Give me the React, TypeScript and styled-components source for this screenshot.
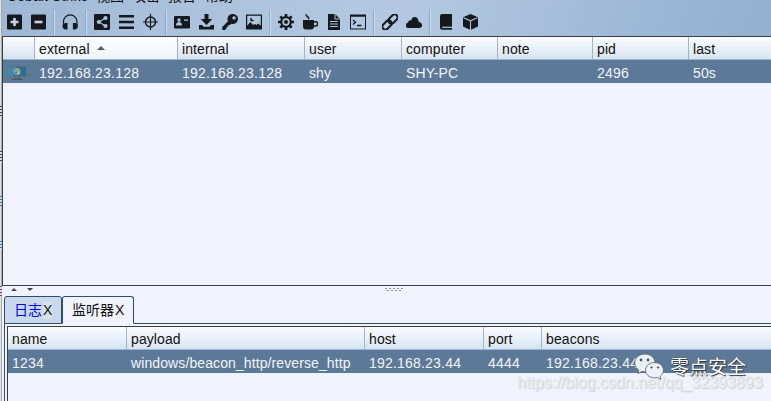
import React from "react";
import styled, { createGlobalStyle, css } from "styled-components";

const Global = createGlobalStyle`
  * { box-sizing: border-box; }
  body { margin: 0; background: #f0f3fb; }
`;

const Screen = styled.div`
  width: 771px;
  height: 401px;
  display: flex;
  overflow: hidden;
  background: #f0f3fb;
  font: 14px/22px "Liberation Sans", "Noto Sans CJK SC", sans-serif;
  color: #111;
`;

const Backdrop = styled.div`
  flex: none;
  width: 2px;
  display: flex;
  flex-direction: column;
  background: linear-gradient(90deg, #e2e2e2 50%, #a9a9a9 50%);
`;

const Mark = styled.i<{ $gap: number; $color: string; $h: number }>`
  flex: none;
  margin-top: ${(p) => p.$gap}px;
  height: ${(p) => p.$h}px;
  background: repeating-linear-gradient(${(p) => p.$color} 0 1px, #d8d8d8 1px 3px);
`;

const Window = styled.main`
  flex: 1;
  min-width: 0;
  display: flex;
  flex-direction: column;
`;

const Chrome = styled.header`
  flex: none;
  height: 36px;
  background: linear-gradient(105deg, #9db8d5 0%, #a9c1db 20%, #b4c9e1 52%, #a0bad7 78%, #93b0d0 100%);
`;

const MenuBar = styled.nav`
  height: 8px;
  display: flex;
  align-items: flex-end;
  overflow: hidden;
  padding: 0 0 2px 5px;
`;

const MenuItem = styled.span<{ $width: number; $spacing?: number }>`
  flex: none;
  width: ${(p) => p.$width}px;
  height: 20px;
  line-height: 20px;
  letter-spacing: ${(p) => p.$spacing ?? 0}px;
  white-space: nowrap;
`;

const Toolbar = styled.div`
  display: flex;
  height: 28px;
  align-items: center;
`;

const Tool = styled.span`
  flex: none;
  width: 24px;
  height: 28px;
  padding: 6px 4px;
  svg { display: block; }
`;

const Divider = styled.i`
  flex: none;
  width: 8px;
  height: 25px;
  border-left: 3px solid transparent;
  background: linear-gradient(90deg, #90a9c3 1px, #ccdcec 1px 2px, transparent 2px) padding-box;
`;

const Table = styled.section<{ $h?: number }>`
  flex: none;
  height: ${(p) => (p.$h ? p.$h + "px" : "auto")};
  border-top: 1px solid #3b3e42;
  border-left: 1px solid #3b3e42;
  border-bottom: ${(p) => (p.$h ? "1px solid #3b3e42" : "0")};
  background: #f0f3fb;
`;

const Row = styled.div<{ $head?: boolean; $cols: string }>`
  display: grid;
  grid-template-columns: ${(p) => p.$cols};
  height: 23px;
  overflow: hidden;
  ${(p) =>
    p.$head
      ? css`
          background: linear-gradient(#fafcff, #d9e4f1);
          border-bottom: 1px solid #9ab6d2;
          color: #111;
        `
      : css`
          background: #5d7998;
          color: #f2f5fa;
        `}
`;

const Cell = styled.span<{ $head?: boolean; $sorted?: boolean; $last?: boolean; $spacing?: number }>`
  display: flex;
  align-items: center;
  height: 23px;
  padding: ${(p) => (p.$head ? 1 : 3)}px 0 0 4px;
  line-height: 20px;
  letter-spacing: ${(p) => p.$spacing ?? 0.1}px;
  white-space: nowrap;
  background: ${(p) => (p.$sorted ? "linear-gradient(#fdfeff, #edf3f9)" : "none")};
  border-right: ${(p) => (p.$last ? 0 : 1)}px solid ${(p) => (p.$head ? "#9ab6d2" : "transparent")};
`;

const SortArrow = styled.i`
  margin: -2px 0 0 7px;
  border: 4px solid transparent;
  border-top: 0;
  border-bottom-color: #55585c;
`;

const Splitter = styled.div`
  flex: none;
  height: 10px;
  svg { display: block; }
`;

const Tabs = styled.div`
  flex: none;
  height: 28px;
  display: flex;
  padding-left: 2px;
  background: linear-gradient(#2c4f70, #2c4f70) 2px 27px / 100% 1px no-repeat;
`;

const Tab = styled.div<{ $width: number; $active?: boolean }>`
  width: ${(p) => p.$width}px;
  height: 28px;
  display: flex;
  align-items: center;
  padding: 0 0 1px 9px;
  border: 1px solid #2c4f70;
  border-radius: 3px 3px 0 0;
  border-bottom-color: ${(p) => (p.$active ? "#f0f3fb" : "#2c4f70")};
  background: ${(p) => (p.$active ? "#f0f3fb" : "#cad9ea")};
  color: ${(p) => (p.$active ? "#111" : "#0000f0")};
  white-space: nowrap;
`;

const Close = styled.b<{ $active?: boolean }>`
  margin: 1px 0 0 1px;
  font-weight: 400;
  line-height: 17px;
  color: #111;
  background: ${(p) => (p.$active ? "#eceef4" : "#d6e1ec")};
`;

const Pane = styled.div`
  flex: 1;
  margin-left: 2px;
  padding: 2px 0 0 2px;
  border-left: 1px solid #2c4f70;
`;

const PaneInner = styled.div`
  height: 100%;
  border-left: 1px solid #3b3e42;
  section { border-left: 0; }
`;

const Watermark = styled.div`
  position: absolute;
  left: 517px;
  top: 373px;
  font-size: 16px;
  line-height: 20px;
  white-space: nowrap;
  color: #e9ebf0;
  text-shadow: 1px 1px 1px #c9ccd3;
`;

const Brand = styled.div`
  position: absolute;
  left: 634px;
  top: 353px;
  display: flex;
  color: #fff;
`;

const BrandName = styled.span`
  margin: 1px 0 0 5px;
  font-size: 19px;
  line-height: 27px;
  text-shadow: 1px 1px 1px #30343a, 0 0 1px #30343a;
`;

const K = "#15181c";

const shapes: Record<string, React.ReactNode> = {
  plus: <><rect x="1" y="0.5" width="15" height="15" rx="1" /><path d="M8.500 4v8M4.500 8h8" stroke="#c3d4e6" strokeWidth="2.600" /></>,
  minus: <><rect x="1" y="0.5" width="15" height="15" rx="1" /><path d="M4.500 8h8" stroke="#c3d4e6" strokeWidth="2.600" /></>,
  headphones: <><path d="M1.500 11V7.600a6.700 6.700 0 0 1 13.400 0V11" fill="none" stroke={K} strokeWidth="1.200" /><path d="M3.200 9h2.300v6.600H4C1.800 15.600.5 14 .5 12c0-1.500 1-2.700 2.700-3zM13.200 9h-2.300v6.600h1.500c2.200 0 3.500-1.600 3.500-3.600 0-1.500-1-2.700-2.700-3z" /></>,
  share: <><rect x="0" y="0" width="16" height="16" rx="1" /><path d="M11.500 4 5 8l6.500 4" fill="none" stroke="#adc3dc" strokeWidth="1.300" /><g fill="#adc3dc"><circle cx="11.500" cy="4" r="2.100" /><circle cx="4.800" cy="8" r="2.100" /><circle cx="11.500" cy="12" r="2.100" /></g></>,
  bars: <path d="M1 1h15v2.500H1zM1 6.800h15v2.400H1zM1 12.500h15V15H1z" />,
  target: <g fill="none" stroke={K}><circle cx="8.500" cy="8" r="5" strokeWidth="1.500" /><path d="M8.500 0v16M1 8h15" strokeWidth="1.200" /></g>,
  card: <><rect x="0" y="2" width="16" height="12.500" rx="1.200" /><g fill="#adc3dc"><circle cx="5" cy="6" r="1.700" /><path d="M2 11.500c0-2.200 1-3.400 3-3.400s3 1.200 3 3.400zM10 5.500h4v1.300h-4z" /></g></>,
  download: <path d="M6.500 0h4v5h3.800L8.500 11 2.700 5h3.800zM1 11h3l1.500 1.700h6L13 11h3v4.500H1z" />,
  key: <path fillRule="evenodd" d="M11 0a5 5 0 1 1-1.700 9.700L8 11H6.300v1.700H4.600v1.700L3 16H.3v-3L6 7.200A5 5 0 0 1 11 0zm1 2.200a1.700 1.700 0 1 0 .1 3.400 1.700 1.700 0 0 0-.1-3.400z" />,
  image: <><path fillRule="evenodd" d="M0 .5h16v15H0zM1.200 1.700v10l3-3.700 3 3 1.500-1 2 1 1.500-1.500 2.600 2.200V1.700z" /><path d="M5.500 3.500a2 2 0 1 0 2.500 2.500 2 2 0 0 1-2.500-2.500z" /></>,
  gear: <><circle cx="8" cy="8" r="4.800" fill="none" stroke={K} strokeWidth="2.200" /><path d="M8 0v3M8 13v3M0 8h3M13 8h3M2.350 2.350l2.100 2.100M11.550 11.550l2.100 2.100M2.350 13.650l2.100-2.100M11.550 4.450l2.100-2.100" stroke={K} strokeWidth="2.700" /><circle cx="8" cy="8" r="2" /></>,
  coffee: <><path d="M1 6h11v6.500a3 3 0 0 1-3 3H4a3 3 0 0 1-3-3z" /><path d="M12 7.800h1.500a2 2 0 0 1 0 4.200H12M6 5C8.500 3 3 2.500 4.500.3" fill="none" stroke={K} strokeWidth="1.500" /></>,
  file: <><path d="M2 0h7l5 5v11H2z" /><path d="M9 0v5h5M4 7.500h8M4 10h8M4 12.500h8" fill="none" stroke="#adc3dc" strokeWidth="1" /></>,
  terminal: <><path fillRule="evenodd" d="M0 .5h16v15H0zM1 2.800v11.700h14V2.800z" /><path d="m3 6 2.500 2.200L3 10.500M7 11.500h4.500" fill="none" stroke={K} strokeWidth="1.300" /></>,
  link: <g transform="rotate(-45 8 8)" fill="none" stroke={K} strokeWidth="2"><rect x="-1.500" y="5" width="10.500" height="6" rx="3" /><rect x="7" y="5" width="10.500" height="6" rx="3" /></g>,
  cloud: <path d="M2.500 14C-.8 14-.8 9 2.200 8.600c0-2 1.700-2.900 3-2.200C6 1.500 12.600 1.800 12.600 7.800 17 8.300 17 14 13.500 14z" />,
  book: <><path d="M4 0h10v15.700H4a2 2 0 0 1-2-2V2a2 2 0 0 1 2-2z" /><path d="M4 13.300h10" stroke="#adc3dc" strokeWidth="1.200" /></>,
  cube: <><path d="M8.500 0 16 3.200v9.200L8.500 16 1 12.400V3.200z" /><path d="m1.500 3.800 7 3 7-3M8.500 6.800V16" fill="none" stroke="#adc3dc" strokeWidth="1.100" /></>,
};

const groups = [
  ["plus", "minus"],
  ["headphones"],
  ["share", "bars", "target"],
  ["card", "download", "key", "image"],
  ["gear", "coffee", "file", "terminal"],
  ["link", "cloud"],
  ["book", "cube"],
];

const sessionCols = "32px 143px 127px 97px 96px 95px 96px 1fr";
const listenerCols = "119px 238px 119px 58px 1fr";

const Computer = () => (
  <svg width="20" height="17" viewBox="0 0 20 17">
    <path d="M0 .5h20v12.500H0z" fill="#6b7580" />
    <path d="M1 1.500h18v10H1z" fill="#2b6f96" />
    <path d="M1 1.500h8l-3 10H1z" fill="#3f8aac" />
    <path d="M6 13h8l2 2H4z" fill="#525b66" />
    <circle cx="10" cy="6.500" r="3.500" fill="#8cabb5" />
    <path d="M8 4.500h2v2H8z" fill="#d2753c" />
    <path d="M10.500 5h2v2h-2z" fill="#89ad49" />
    <path d="M8 7h2v2H8z" fill="#397fc0" />
    <path d="M10.500 7.500h2v1.500h-2z" fill="#e8c14e" />
  </svg>
);

const Grip = () => (
  <svg width="500" height="10" fill="#43474c">
    <path d="m9 5 3-3 3 3zM25 2h6l-3 3z" />
    <g fill="#8a929e">
      {[0, 1, 2, 3, 4].map((i) => (
        <React.Fragment key={i}>
          <rect x={383 + i * 4} y="2" width="2" height="1" />
          {i < 4 && <rect x={385 + i * 4} y="4" width="2" height="1" />}
        </React.Fragment>
      ))}
    </g>
  </svg>
);

const WeChat = () => (
  <svg width="31" height="29" viewBox="0 0 31 29" fill="#edf1f5" stroke="#4a5a6c" strokeWidth=".8">
    <path d="M11 1C5 1 .7 4.800.7 10c0 3 1.500 5.200 4 7L4 20.500l4-2c5 1.200 13-1 13-8.500 0-5-4-9-10-9z" />
    <path d="M20.500 9.500c-5.200 0-9 3.300-9 7.700s3.800 7.600 9 7.600c1 0 2-.1 3-.4l3.500 2-.8-3.200c2-1.500 3.300-3.500 3.300-6 0-4.400-3.800-7.700-9-7.700z" />
    <g fill="#40566f" stroke="none"><circle cx="7" cy="7" r="1.400" /><circle cx="14" cy="7" r="1.400" /><circle cx="17.500" cy="14.500" r="1.100" /><circle cx="24" cy="14.500" r="1.100" /></g>
  </svg>
);

export default function App() {
  return (
    <Screen>
      <Global />
      <Backdrop>
        <Mark $gap={106} $h={12} $color="#44444c" />
        <Mark $gap={33} $h={12} $color="#44444c" />
        <Mark $gap={33} $h={10} $color="#347da8" />
        <Mark $gap={35} $h={9} $color="#347da8" />
        <Mark $gap={36} $h={11} $color="#8b416c" />
      </Backdrop>
      <Window>
        <Chrome>
          <MenuBar>
            <MenuItem $width={89} $spacing={0.1}>Cobalt Strike</MenuItem>
            <MenuItem $width={36}>视图</MenuItem>
            <MenuItem $width={36}>攻击</MenuItem>
            <MenuItem $width={37}>报告</MenuItem>
            <MenuItem $width={36}>帮助</MenuItem>
          </MenuBar>
          <Toolbar>
            {groups.map((group, g) => (
              <React.Fragment key={g}>
                {g > 0 && <Divider />}
                {group.map((name) => (
                  <Tool key={name}>
                    <svg width="16" height="16" viewBox="0 0 16 16" fill={K}>{shapes[name]}</svg>
                  </Tool>
                ))}
              </React.Fragment>
            ))}
          </Toolbar>
        </Chrome>
        <Table $h={250}>
          <Row $head $cols={sessionCols}>
            <Cell $head />
            <Cell $head $sorted>external<SortArrow /></Cell>
            {["internal", "user", "computer", "note", "pid", "last"].map((t) => (
              <Cell $head $last={t === "last"} key={t}>{t}</Cell>
            ))}
          </Row>
          <Row $cols={sessionCols}>
            <Cell><Computer /></Cell>
            <Cell $spacing={0.2}>192.168.23.128</Cell>
            <Cell $spacing={0.2}>192.168.23.128</Cell>
            <Cell>shy</Cell>
            <Cell>SHY-PC</Cell>
            <Cell />
            <Cell $spacing={0.2}>2496</Cell>
            <Cell>50s</Cell>
          </Row>
        </Table>
        <Splitter><Grip /></Splitter>
        <Tabs>
          <Tab $width={58}>日志<Close>X</Close></Tab>
          <Tab $width={72} $active>监听器<Close $active>X</Close></Tab>
        </Tabs>
        <Pane>
          <PaneInner>
            <Table>
              <Row $head $cols={listenerCols}>
                {["name", "payload", "host", "port", "beacons"].map((t) => (
                  <Cell $head $last={t === "beacons"} key={t}>{t}</Cell>
                ))}
              </Row>
              <Row $cols={listenerCols}>
                <Cell $spacing={0.2}>1234</Cell>
                <Cell>windows/beacon_http/reverse_http</Cell>
                <Cell $spacing={0.2}>192.168.23.44</Cell>
                <Cell $spacing={0.2}>4444</Cell>
                <Cell $spacing={0.2}>192.168.23.44</Cell>
              </Row>
            </Table>
          </PaneInner>
        </Pane>
      </Window>
      <Watermark>https://blog.csdn.net/qq_32393893</Watermark>
      <Brand><WeChat /><BrandName>零点安全</BrandName></Brand>
    </Screen>
  );
}
